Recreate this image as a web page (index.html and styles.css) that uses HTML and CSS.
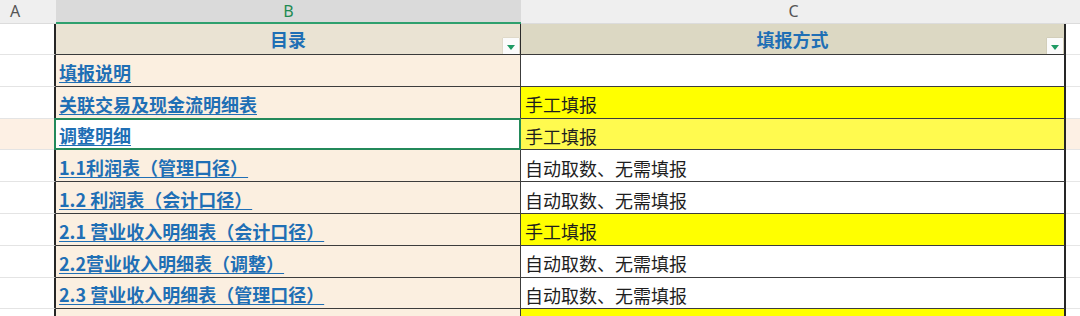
FILE: index.html
```html
<!DOCTYPE html>
<html lang="zh-CN">
  <head>
    <meta charset="UTF-8" />
    <meta name="viewport" content="width=device-width, initial-scale=1.0" />
    <title>目录</title>
    <link rel="stylesheet" href="styles.css">
  </head>
  <body>
    <div class="sheet">
      <!-- column letters -->
      <div class="letter gutter-letter">A</div>
      <div class="letter active">B</div>
      <div class="letter">C</div>
      <div class="letter"></div>

      <!-- header row -->
      <div class="gutter"></div>
      <div class="head head-b">目录<span class="filter"></span></div>
      <div class="head head-c">填报方式<span class="filter"></span></div>
      <div class="edge"></div>

      <div class="gutter"></div>
      <div class="name"><a href="#">填报说明</a></div>
      <div class="mode"></div>
      <div class="edge"></div>

      <div class="gutter"></div>
      <div class="name"><a href="#">关联交易及现金流明细表</a></div>
      <div class="mode fill">手工填报</div>
      <div class="edge"></div>

      <div class="gutter sel"></div>
      <div class="name current"><a href="#">调整明细</a></div>
      <div class="mode fill sel">手工填报</div>
      <div class="edge sel"></div>

      <div class="gutter"></div>
      <div class="name"><a href="#">1.1利润表（管理口径）</a></div>
      <div class="mode">自动取数、无需填报</div>
      <div class="edge"></div>

      <div class="gutter"></div>
      <div class="name"><a href="#">1.2 利润表（会计口径）</a></div>
      <div class="mode">自动取数、无需填报</div>
      <div class="edge"></div>

      <div class="gutter"></div>
      <div class="name"><a href="#">2.1 营业收入明细表（会计口径）</a></div>
      <div class="mode fill">手工填报</div>
      <div class="edge"></div>

      <div class="gutter"></div>
      <div class="name"><a href="#">2.2营业收入明细表（调整）</a></div>
      <div class="mode">自动取数、无需填报</div>
      <div class="edge"></div>

      <div class="gutter"></div>
      <div class="name"><a href="#">2.3 营业收入明细表（管理口径）</a></div>
      <div class="mode">自动取数、无需填报</div>
      <div class="edge"></div>

      <div class="gutter"></div>
      <div class="name"></div>
      <div class="mode fill"></div>
      <div class="edge"></div>
    </div>
  </body>
</html>
```

FILE: styles.css
```css
* {
  margin: 0;
  padding: 0;
  box-sizing: border-box;
}

body {
  font-family: "Noto Sans CJK SC", "Noto Sans", sans-serif;
  background-color: #ffffff;
  overflow: hidden;
}

.sheet {
  display: grid;
  grid-template-columns: 56px 465px 545px 1fr;
  grid-template-rows: 23.5px 31.5px;
  grid-auto-rows: 31.8px;
  height: 316px;
  overflow: hidden;
}

/* column letters bar */
.letter {
  background-color: #efefef;
  border-bottom: 1px solid #dcdcdc;
  color: #555555;
  font-family: "Noto Sans", sans-serif;
  font-size: 16px;
  display: flex;
  align-items: center;
  justify-content: center;
}

.gutter-letter {
  justify-content: flex-start;
  padding-left: 10px;
}

.letter.active {
  background-color: #dadada;
  color: #1e8a52;
  border-bottom: 2px solid #2fa06e;
}

/* header row */
.head {
  position: relative;
  background-color: #eae3d3;
  border-bottom: 1px solid #3a3a3a;
  color: #1f6fb5;
  font-size: 18px;
  font-weight: 700;
  display: flex;
  align-items: center;
  justify-content: center;
  padding-top: 1px;
}

.head-b {
  border-right: 1px solid #2a2a2a;
}

.head-c {
  background-color: #dcd8c3;
  border-right: 2px solid #262626;
}

.filter {
  position: absolute;
  right: 1px;
  bottom: 0;
  width: 16px;
  height: 16px;
  background-color: #fbfbfb;
  box-shadow: 0 0 1px rgba(0, 0, 0, 0.25);
}

.filter::after {
  content: "";
  position: absolute;
  left: 4px;
  top: 7px;
  border-left: 4px solid transparent;
  border-right: 4px solid transparent;
  border-top: 5px solid #1e9a63;
}

/* body cells */
.gutter {
  background-color: #ffffff;
  border-bottom: 1px solid #e4e4e4;
  border-right: 2px solid #262626;
}

.edge {
  background-color: #ffffff;
  border-bottom: 1px solid #e6e6e6;
}

.name {
  background-color: #fbefe0;
  border-bottom: 1px solid #3c3c3c;
  border-right: 1px solid #3c3c3c;
  display: flex;
  align-items: center;
  padding: 3px 0 0 3px;
  font-size: 18px;
  font-weight: 700;
  white-space: nowrap;
}

.name a {
  color: #1f6fb5;
  text-decoration: underline;
  text-decoration-thickness: 1px;
  text-underline-offset: 2px;
}

.mode {
  background-color: #ffffff;
  border-bottom: 1px solid #3c3c3c;
  border-right: 2px solid #262626;
  display: flex;
  align-items: center;
  padding: 4px 0 0 4px;
  font-size: 18px;
  color: #1e1e1e;
  white-space: nowrap;
}

.mode.fill {
  background-color: #ffff00;
}

/* selected row */
.gutter.sel,
.edge.sel {
  background-color: #fdf0e4;
}

.mode.fill.sel {
  background-color: #fffa4f;
}

.name.current {
  position: relative;
  background-color: #ffffff;
}

.name.current::after {
  content: "";
  position: absolute;
  left: -2px;
  top: -1px;
  right: -1px;
  bottom: -1px;
  border: 2px solid #23895a;
}
```
